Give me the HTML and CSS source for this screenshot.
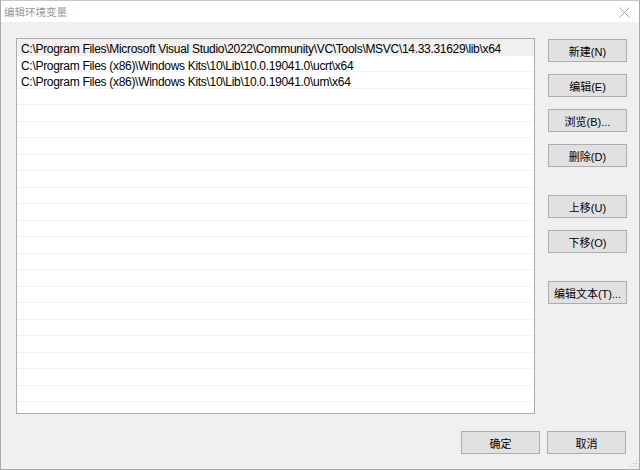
FILE: index.html
```html
<!DOCTYPE html>
<html lang="zh-CN">
<head>
    <meta charset="UTF-8">
    <meta name="viewport" content="width=device-width, initial-scale=1.0">
    <title>编辑环境变量</title>
    <link rel="stylesheet" href="styles.css">
</head>
<body>
    <div class="window">
        <div class="titlebar">
            <span class="title">编辑环境变量</span>
            <svg class="close" width="11" height="11" viewBox="0 0 11 11">
                <path d="M0.5 0.5 L10.5 10.5 M10.5 0.5 L0.5 10.5" stroke="#a8a8a8" stroke-width="1" fill="none"/>
            </svg>
        </div>
        <div class="content">
            <div class="main">
                <div class="list">
                    <div class="row row-selected">C:\Program Files\Microsoft Visual Studio\2022\Community\VC\Tools\MSVC\14.33.31629\lib\x64</div>
                    <div class="row">C:\Program Files (x86)\Windows Kits\10\Lib\10.0.19041.0\ucrt\x64</div>
                    <div class="row">C:\Program Files (x86)\Windows Kits\10\Lib\10.0.19041.0\um\x64</div>
                    <div class="row"></div>
                    <div class="row"></div>
                    <div class="row"></div>
                    <div class="row"></div>
                    <div class="row"></div>
                    <div class="row"></div>
                    <div class="row"></div>
                    <div class="row"></div>
                    <div class="row"></div>
                    <div class="row"></div>
                    <div class="row"></div>
                    <div class="row"></div>
                    <div class="row"></div>
                    <div class="row"></div>
                    <div class="row"></div>
                    <div class="row"></div>
                    <div class="row"></div>
                    <div class="row"></div>
                    <div class="row"></div>
                    <div class="row"></div>
                    <div class="row"></div>
                </div>
                <div class="side">
                    <button class="btn">新建(N)</button>
                    <button class="btn">编辑(E)</button>
                    <button class="btn">浏览(B)...</button>
                    <button class="btn">删除(D)</button>
                    <button class="btn btn-group">上移(U)</button>
                    <button class="btn">下移(O)</button>
                    <button class="btn btn-group">编辑文本(T)...</button>
                </div>
            </div>
            <div class="footer">
                <button class="btn">确定</button>
                <button class="btn">取消</button>
            </div>
            <svg class="grip" width="8" height="8" viewBox="0 0 8 8">
                <rect x="6" y="0" width="1" height="1" fill="#b8b8b8"/>
                <rect x="3" y="3" width="1" height="1" fill="#b8b8b8"/>
                <rect x="6" y="3" width="1" height="1" fill="#b8b8b8"/>
                <rect x="0" y="6" width="1" height="1" fill="#b8b8b8"/>
                <rect x="3" y="6" width="1" height="1" fill="#b8b8b8"/>
                <rect x="6" y="6" width="1" height="1" fill="#b8b8b8"/>
            </svg>
        </div>
    </div>
</body>
</html>
```

FILE: styles.css
```css
html, body {
    margin: 0;
    padding: 0;
}
body {
    font-family: "Liberation Sans", "Noto Sans CJK SC", sans-serif;
    font-size: 12px;
    color: #000;
    background: #f0f0f0;
}
.window {
    width: 640px;
    height: 470px;
    box-sizing: border-box;
    border: 1px solid #aaaaaa;
    border-top: 1px solid #c8c8c8;
    display: flex;
    flex-direction: column;
    background: #f0f0f0;
}
.titlebar {
    height: 21px;
    background: #fff;
    display: flex;
    align-items: center;
    justify-content: space-between;
    padding: 0 9px 0 3px;
    flex-shrink: 0;
}
.title {
    color: #9a9a9a;
    font-family: "Noto Sans CJK SC", sans-serif;
    font-size: 10.5px;
}
.close {
    margin-top: 1px;
}
.content {
    flex: 1;
    display: flex;
    flex-direction: column;
    position: relative;
}
.main {
    display: flex;
    padding: 16px 0 0 15px;
}
.list {
    width: 517px;
    height: 374px;
    background: #fff;
    border: 1px solid #adadad;
    overflow: hidden;
}
.row {
    height: 12.5px;
    padding-top: 3px;
    line-height: 14px;
    border-bottom: 1px solid #f3f3f3;
    padding-left: 4px;
    white-space: nowrap;
    letter-spacing: -0.3px;
}
.row-selected {
    background: #f0f0f0;
    border-bottom-color: #f0f0f0;
}
.side {
    display: flex;
    flex-direction: column;
    gap: 12px;
    padding: 1px 0 0 13px;
}
.btn {
    width: 79px;
    height: 23px;
    padding: 0;
    margin: 0;
    background: #e1e1e1;
    border: 1px solid #adadad;
    font-family: "Liberation Sans", "Noto Sans CJK SC", sans-serif;
    font-size: 11px;
    color: #000;
}
.btn-group {
    margin-top: 16px;
}
.footer {
    display: flex;
    justify-content: flex-end;
    gap: 7px;
    padding: 17px 13px 0 0;
}
.grip {
    position: absolute;
    right: 1px;
    bottom: 1px;
}
```
